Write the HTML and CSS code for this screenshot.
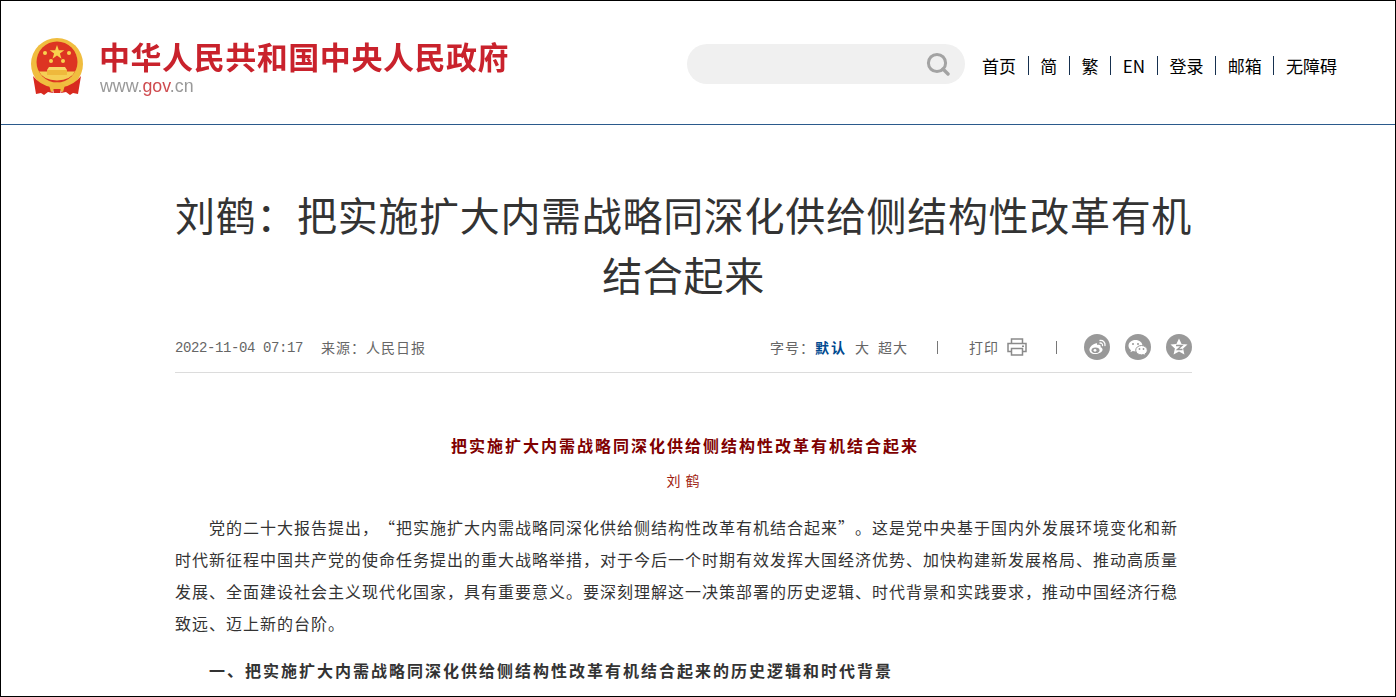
FILE: index.html
```html
<!DOCTYPE html>
<html lang="zh-CN">
<head>
<meta charset="utf-8">
<title>刘鹤：把实施扩大内需战略同深化供给侧结构性改革有机结合起来</title>
<link rel="stylesheet" href="styles.css">
</head>
<body>
<div class="page">
  <header class="header">
    <a class="logo">
      <svg class="emblem" viewBox="0 0 54 57" width="54" height="57" aria-hidden="true">
        <circle cx="27" cy="26" r="26" fill="#f0bd3f"/>
        <circle cx="27" cy="24" r="20.5" fill="#dd3522"/>
        <path d="M9 33.5 H45 Q41 42 27 42.5 Q13 42 9 33.5Z" fill="#f5cf55"/>
        <path d="M19 29 H35 L37 32 H17Z" fill="#f8d76a"/>
        <path d="M17 32 H37 V37 H17Z" fill="#efb93c"/>
        <path d="M3 38 Q10 47 21 49 L23 55 L18 54 L14 57 L11 55 L6 56 Z" fill="#d8291f"/>
        <path d="M51 38 Q44 47 33 49 L31 55 L36 54 L40 57 L43 55 L48 56 Z" fill="#d8291f"/>
        <path d="M19 47 Q27 42 35 47 L33 54 Q27 50 21 54Z" fill="#efb93c"/>
        <path d="M23.5 51 H30.5 V55 H23.5Z" fill="#d8291f"/>
        <polygon points="27,7 28.8,12.2 34.3,12.2 29.9,15.5 31.5,20.7 27,17.5 22.5,20.7 24.1,15.5 19.7,12.2 25.2,12.2" fill="#f8d24e"/>
        <circle cx="15" cy="15" r="2" fill="#f8d24e"/>
        <circle cx="39" cy="15" r="2" fill="#f8d24e"/>
        <circle cx="21" cy="23" r="2" fill="#f8d24e"/>
        <circle cx="33" cy="23" r="2" fill="#f8d24e"/>
      </svg>
      <span class="logo-text">
        <span class="logo-name">中华人民共和国中央人民政府</span>
        <span class="logo-url">www.<em>gov</em>.cn</span>
      </span>
    </a>
    <div class="header-right">
      <div class="search">
        <svg viewBox="0 0 24 24" width="24" height="24" aria-hidden="true"><circle cx="11" cy="11" r="8.6" fill="none" stroke="#a3a3a3" stroke-width="3"/><path d="M17 17 L22 22" stroke="#a3a3a3" stroke-width="3.4" stroke-linecap="round"/></svg>
      </div>
      <nav class="nav">
        <a>首页</a><i></i><a>简</a><i></i><a>繁</a><i></i><a>EN</a><i></i><a>登录</a><i></i><a>邮箱</a><i></i><a>无障碍</a>
      </nav>
    </div>
  </header>

  <main class="article">
    <h1 class="title">刘鹤：把实施扩大内需战略同深化供给侧结构性改革有机结合起来</h1>
    <div class="meta">
      <div class="meta-left">
        <span class="date">2022-11-04 07:17</span>
        <span class="source">来源：人民日报</span>
      </div>
      <div class="meta-right">
        <span class="sizes">字号：<b>默认</b><a>大</a><a>超大</a></span>
        <i class="bar"></i>
        <span class="print">打印
          <svg viewBox="0 0 20 18" width="20" height="18" aria-hidden="true"><path d="M4.5 5.5 V1 H15.5 V5.5 M4.5 13.5 H1 V5.5 H19 V13.5 H15.5 M4.5 10.5 H15.5 V17 H4.5Z" fill="none" stroke="#8a8a8a" stroke-width="1.5"/><rect x="15" y="7.5" width="2" height="1.5" fill="#8a8a8a"/></svg>
        </span>
        <i class="bar"></i>
        <span class="shares">
          <svg class="share" viewBox="0 0 26 26" aria-hidden="true"><circle cx="13" cy="13" r="13" fill="#999"/><path d="M11.5 9.5 C7.5 10.5 5 14 5.5 16.5 C6 19.5 9.5 20.5 12.5 20 C16 19.5 19 17.5 18.5 15 C18.2 13.5 16.5 13.2 16.5 13.2 C17.3 11.5 16.2 10 13 11 C13.5 9.5 13 9 11.5 9.5Z" fill="#fff"/><ellipse cx="11.5" cy="16.2" rx="4" ry="2.8" fill="#999"/><circle cx="11" cy="16.3" r="1.4" fill="#fff"/><path d="M16 6.5 C19 6 21.5 8.5 21 11.5 M16 9 C17.5 8.8 18.8 10 18.5 11.5" fill="none" stroke="#fff" stroke-width="1.3" stroke-linecap="round"/></svg>
          <svg class="share" viewBox="0 0 26 26" aria-hidden="true"><circle cx="13" cy="13" r="13" fill="#999"/><path d="M10.5 6 C6.5 6 3.5 8.6 3.5 11.8 C3.5 13.7 4.5 15.2 6 16.3 L5.4 18.3 L7.8 17.1 C8.8 17.4 9.5 17.5 10.5 17.5 C14.5 17.5 17.5 14.9 17.5 11.8 C17.5 8.6 14.5 6 10.5 6Z" fill="#fff"/><path d="M16.5 11.5 C13.3 11.5 10.7 13.6 10.7 16.2 C10.7 18.8 13.3 20.9 16.5 20.9 C17.2 20.9 17.9 20.8 18.5 20.6 L20.5 21.6 L20 19.9 C21.4 19 22.3 17.7 22.3 16.2 C22.3 13.6 19.7 11.5 16.5 11.5Z" fill="#fff" stroke="#999" stroke-width="1"/><circle cx="8" cy="10" r="1" fill="#999"/><circle cx="13" cy="10" r="1" fill="#999"/><circle cx="14.5" cy="15" r=".9" fill="#999"/><circle cx="18.5" cy="15" r=".9" fill="#999"/></svg>
          <svg class="share" viewBox="0 0 26 26" aria-hidden="true"><circle cx="13" cy="13" r="13" fill="#999"/><polygon points="13,4.5 15.6,10 21.5,10.6 17.1,14.6 18.4,20.5 13,17.4 7.6,20.5 8.9,14.6 4.5,10.6 10.4,10" fill="#fff"/><path d="M10 11.5 H16 L11.5 15.5 H16.5" fill="none" stroke="#999" stroke-width="1.4"/></svg>
        </span>
      </div>
    </div>
    <section class="body">
      <p class="sub-title">把实施扩大内需战略同深化供给侧结构性改革有机结合起来</p>
      <p class="author">刘 鹤</p>
      <p class="para">党的二十大报告提出，“把实施扩大内需战略同深化供给侧结构性改革有机结合起来”。这是党中央基于国内外发展环境变化和新时代新征程中国共产党的使命任务提出的重大战略举措，对于今后一个时期有效发挥大国经济优势、加快构建新发展格局、推动高质量发展、全面建设社会主义现代化国家，具有重要意义。要深刻理解这一决策部署的历史逻辑、时代背景和实践要求，推动中国经济行稳致远、迈上新的台阶。</p>
      <p class="para heading">一、把实施扩大内需战略同深化供给侧结构性改革有机结合起来的历史逻辑和时代背景</p>
    </section>
  </main>
</div>
</body>
</html>
```

FILE: styles.css
```css
* { box-sizing: border-box; }
html, body { margin: 0; padding: 0; height: 100%; overflow: hidden; background: #fff; }
body { font-family: "Noto Sans CJK SC", "Noto Sans", sans-serif; color: #333; text-spacing-trim: space-all; font-feature-settings: "palt" 0, "chws" 0; }
p, h1 { margin: 0; font-weight: normal; }
.page { height: 697px; border: 1px solid #000; overflow: hidden; }

.header { height: 124px; border-bottom: 1px solid #2b5a8c; display: flex; justify-content: space-between; padding: 37px 58px 0 29px; }
.logo { display: flex; gap: 15px; align-items: flex-start; height: 56px; }
.emblem { display: block; flex: none; filter: blur(.4px); }
.logo-text { display: flex; flex-direction: column; }
.logo-name { font-family: "Liberation Sans", "Noto Sans CJK SC", sans-serif; font-size: 31px; line-height: 36px; font-weight: 700; letter-spacing: .55px; color: #c9222c; white-space: nowrap; margin-top: 3px; filter: blur(.3px); }
.logo-url { font-family: "Liberation Sans", sans-serif; font-size: 17.8px; line-height: 18px; color: #999; margin: 0 0 0 1px; filter: blur(.3px); }
.logo-url em { font-style: normal; color: #cf4b4f; }

.header-right { display: flex; align-items: center; gap: 17px; height: 40px; margin-top: 6px; }
.search { width: 278px; height: 40px; border-radius: 20px; background: #f0f0f0; display: flex; align-items: center; justify-content: flex-end; padding-right: 15px; }
.nav { display: flex; align-items: center; gap: 11.65px; font-size: 17px; color: #000; line-height: 20px; padding-top: 3px; }
.nav i { width: 1px; height: 19px; background: #16304f; }

.article { width: 1017px; margin-left: 174px; }
.title { margin-top: 59px; font-size: 40px; line-height: 60px; letter-spacing: .68px; text-align: center; color: #333; }
.meta { margin-top: 29px; height: 40px; border-bottom: 1px solid #dcdcdc; display: flex; justify-content: space-between; align-items: flex-start; font-size: 14px; color: #666; line-height: 26px; }
.meta-left { display: flex; gap: 18px; padding-top: 2px; }
.date { font-family: "Liberation Mono", monospace; letter-spacing: -.4px; }
.source { letter-spacing: 1px; margin-top: -1px; }
.meta-right { display: flex; align-items: center; height: 28px; letter-spacing: 1px; }
.sizes b { color: #00498f; font-weight: 700; letter-spacing: 2px; margin-right: 8px; }
.sizes a { margin-right: 8px; }
.bar { width: 1px; height: 13px; background: #777; margin: 0 31px 0 21px; }
.print { display: flex; align-items: center; gap: 8px; }
.print + .bar { margin-left: 29px; margin-right: 27px; }
.shares { display: flex; gap: 15px; }
.share { width: 26px; height: 26px; display: block; }

.body { padding-top: 56px; font-size: 16px; letter-spacing: 1px; }
.sub-title { font-size: 16px; line-height: 32px; font-weight: 700; letter-spacing: 2px; color: #800000; text-align: center; padding-left: 3px; }
.author { font-size: 14px; line-height: 24px; margin-top: 7px; color: #a01c10; text-align: center; }
.para { line-height: 32px; text-indent: 2.12em; color: #333; margin-top: 15px; }
.author + .para { margin-top: 19px; }
.heading { font-weight: 700; letter-spacing: 2px; }
```
